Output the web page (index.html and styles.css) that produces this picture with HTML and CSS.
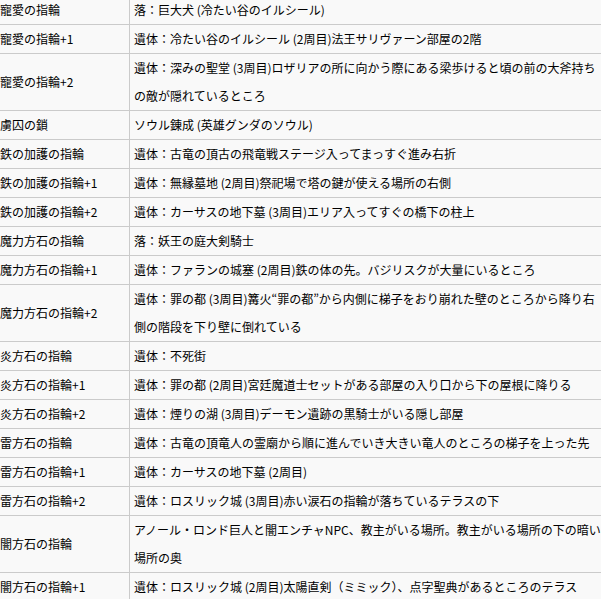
FILE: index.html
```html
<!DOCTYPE html>
<html lang="ja">
<head>
<meta charset="utf-8">
<title>指輪入手場所</title>
<link rel="stylesheet" href="styles.css">
</head>
<body>
<table class="rings">
<colgroup><col class="col-name"><col class="col-place"></colgroup>
<tbody>
<tr><td class="name">寵愛の指輪</td><td class="place">落：巨大犬 (冷たい谷のイルシール)</td></tr>
<tr><td class="name">寵愛の指輪+1</td><td class="place">遺体：冷たい谷のイルシール (2周目)法王サリヴァーン部屋の2階</td></tr>
<tr><td class="name">寵愛の指輪+2</td><td class="place">遺体：深みの聖堂 (3周目)ロザリアの所に向かう際にある梁歩けると頃の前の大斧持ち<br>の敵が隠れているところ</td></tr>
<tr><td class="name">虜囚の鎖</td><td class="place">ソウル錬成 (英雄グンダのソウル)</td></tr>
<tr><td class="name">鉄の加護の指輪</td><td class="place">遺体：古竜の頂古の飛竜戦ステージ入ってまっすぐ進み右折</td></tr>
<tr><td class="name">鉄の加護の指輪+1</td><td class="place">遺体：無縁墓地 (2周目)祭祀場で塔の鍵が使える場所の右側</td></tr>
<tr><td class="name">鉄の加護の指輪+2</td><td class="place">遺体：カーサスの地下墓 (3周目)エリア入ってすぐの橋下の柱上</td></tr>
<tr><td class="name">魔力方石の指輪</td><td class="place">落：妖王の庭大剣騎士</td></tr>
<tr><td class="name">魔力方石の指輪+1</td><td class="place">遺体：ファランの城塞 (2周目)鉄の体の先。バジリスクが大量にいるところ</td></tr>
<tr><td class="name">魔力方石の指輪+2</td><td class="place">遺体：罪の都 (3周目)篝火“罪の都”から内側に梯子をおり崩れた壁のところから降り右<br>側の階段を下り壁に倒れている</td></tr>
<tr><td class="name">炎方石の指輪</td><td class="place">遺体：不死街</td></tr>
<tr><td class="name">炎方石の指輪+1</td><td class="place">遺体：罪の都 (2周目)宮廷魔道士セットがある部屋の入り口から下の屋根に降りる</td></tr>
<tr><td class="name">炎方石の指輪+2</td><td class="place">遺体：煙りの湖 (3周目)デーモン遺跡の黒騎士がいる隠し部屋</td></tr>
<tr><td class="name">雷方石の指輪</td><td class="place">遺体：古竜の頂竜人の霊廟から順に進んでいき大きい竜人のところの梯子を上った先</td></tr>
<tr><td class="name">雷方石の指輪+1</td><td class="place">遺体：カーサスの地下墓 (2周目)</td></tr>
<tr><td class="name">雷方石の指輪+2</td><td class="place">遺体：ロスリック城 (3周目)赤い涙石の指輪が落ちているテラスの下</td></tr>
<tr><td class="name">闇方石の指輪</td><td class="place">アノール・ロンド巨人と闇エンチャNPC、教主がいる場所。教主がいる場所の下の暗い<br>場所の奥</td></tr>
<tr><td class="name">闇方石の指輪+1</td><td class="place">遺体：ロスリック城 (2周目)太陽直剣（ミミック）、点字聖典があるところのテラス</td></tr>
</tbody>
</table>
</body>
</html>
```

FILE: styles.css
```css
html {
  overflow: hidden;
  background: #f9f9f9;
}

body {
  margin: 0;
  background: #f9f9f9;
  color: #000;
  font-family: "Noto Sans CJK JP", "Noto Sans", sans-serif;
  font-size: 12px;
  font-weight: 400;
}

.rings {
  border-collapse: separate;
  border-spacing: 0;
  table-layout: fixed;
  width: 620px;
  margin: -4px 0 0 -4px;
}

.col-name {
  width: 134px;
}

.col-place {
  width: 486px;
}

.rings td {
  box-sizing: border-box;
  padding: 0 4px;
  line-height: 28px;
  vertical-align: middle;
  border-bottom: 1px solid #cbcbcb;
  white-space: nowrap;
  overflow: hidden;
  text-align: left;
}

.rings .name {
  border-right: 1px solid #cbcbcb;
}
```
